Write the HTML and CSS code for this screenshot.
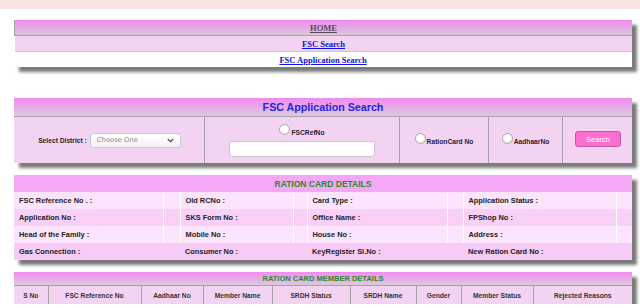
FILE: index.html
```html
<!DOCTYPE html>
<html>
<head>
<meta charset="utf-8">
<link rel="stylesheet" href="styles.css">
</head>
<body>
<div class="topband"></div>

<nav class="nav box">
  <div class="nav-row nav-home"><a class="home-link" href="#">HOME</a></div>
  <div class="nav-row nav-search"><a href="#">FSC Search</a></div>
  <div class="nav-row nav-app"><a href="#">FSC Application Search</a></div>
</nav>

<section class="search box">
  <div class="grad-head search-title">FSC Application Search</div>
  <div class="search-body">
    <div class="cell cell-district">
      <span class="lbl">Select District :</span>
      <div class="select"><span>Choose One</span>
        <svg class="chev" width="7" height="5" viewBox="0 0 7 5"><path d="M0.8 1 L3.5 3.7 L6.2 1" fill="none" stroke="#444" stroke-width="1.2"/></svg>
      </div>
    </div>
    <div class="cell cell-ref">
      <label class="opt"><span class="radio"></span><span class="lbl">FSCRefNo</span></label>
      <div class="textbox"></div>
    </div>
    <div class="cell cell-mid">
      <label class="opt"><span class="radio"></span><span class="lbl">RationCard No</span></label>
    </div>
    <div class="cell cell-mid">
      <label class="opt"><span class="radio"></span><span class="lbl">AadhaarNo</span></label>
    </div>
    <div class="cell cell-btn">
      <button class="btn">Search</button>
    </div>
  </div>
</section>

<section class="details box">
  <div class="details-head">RATION CARD DETAILS</div>
  <table class="dtable">
    <colgroup>
      <col style="width:149px"><col style="width:17px"><col style="width:113px"><col style="width:14px">
      <col style="width:140px"><col style="width:16px"><col style="width:153px"><col style="width:16px">
    </colgroup>
    <tr class="r1"><td>FSC Reference No . :</td><td></td><td>Old RCNo :</td><td></td><td>Card Type :</td><td></td><td>Application Status :</td><td></td></tr>
    <tr class="r2"><td>Application No :</td><td></td><td>SKS Form No :</td><td></td><td>Office Name :</td><td></td><td>FPShop No :</td><td></td></tr>
    <tr class="r1"><td>Head of the Family :</td><td></td><td>Mobile No :</td><td></td><td>House No :</td><td></td><td>Address :</td><td></td></tr>
    <tr class="r4"><td>Gas Connection :</td><td></td><td>Consumer No :</td><td></td><td>KeyRegister Sl.No :</td><td></td><td>New Ration Card No :</td><td></td></tr>
  </table>
</section>

<section class="members box">
  <div class="grad-head members-head">RATION CARD MEMBER DETAILS</div>
  <table class="mtable">
    <colgroup>
      <col style="width:34px"><col style="width:93px"><col style="width:62px"><col style="width:69px"><col style="width:78px">
      <col style="width:66px"><col style="width:45px"><col style="width:72px"><col style="width:99px">
    </colgroup>
    <tr>
      <th>S No</th><th>FSC Reference No</th><th>Aadhaar No</th><th>Member Name</th><th>SRDH Status</th>
      <th>SRDH Name</th><th>Gender</th><th>Member Status</th><th>Rejected Reasons</th>
    </tr>
  </table>
</section>
</body>
</html>
```

FILE: styles.css
```css
* { box-sizing: border-box; }
html, body { margin: 0; padding: 0; background: #fff; }
body { font-family: "Liberation Sans", Arial, sans-serif; color: #222; }

.topband { height: 9px; background: #f8e4e4; }

.box {
  margin-left: 14px;
  width: 618px;
  box-shadow: 5px 5px 3px #7a7a7a;
}

/* NAV */
.nav { margin-top: 11px; background: #fff; }
.nav-row {
  height: 16px;
  display: flex;
  align-items: center;
  justify-content: center;
  font-family: "Liberation Serif", "Times New Roman", serif;
  font-weight: bold;
  font-size: 8.5px;
}
.nav-row a { color: #1010e0; text-decoration: underline; }
.nav-home {
  background: linear-gradient(#f28af2, #d8c8d8);
  border-bottom: 1px solid #a8a0a8;
  border-left: 1px solid #a8a0a8;
}
.nav-home .home-link { color: #584858; }
.nav-search { background: #f2d4f2; border-bottom: 1px solid #d2c2d2; margin-left: 1px; }
.nav-app { height: 15px; background: #fff; }

/* SEARCH PANEL */
.search { margin-top: 31px; background: #f2d4f2; }
.grad-head {
  background: linear-gradient(#f28af2, #dccadc);
  border-bottom: 1px solid #a8a0a8;
  display: flex;
  align-items: center;
  justify-content: center;
  font-weight: bold;
}
.search-title { height: 19px; color: #2323e6; font-size: 10.7px; }
.search-body {
  height: 46px;
  display: grid;
  grid-template-columns: 190px 195px 89px 74px 70px;
}
.cell {
  border-left: 1px solid #a8a0a8;
  display: flex;
  align-items: center;
  justify-content: center;
}
.cell:first-child { border-left: none; }
.lbl { font-weight: bold; font-size: 6.7px; color: #2a2030; }
.cell-district { gap: 3px; padding-left: 1px; }
.select {
  width: 91px;
  height: 15px;
  border: 1px solid #c8c8c8;
  border-radius: 3px;
  background: linear-gradient(#fff, #f2f2f2);
  display: flex;
  align-items: center;
  justify-content: space-between;
  padding: 0 6px 0 6px;
  font-family: "DejaVu Sans", Verdana, sans-serif;
  font-size: 6.8px;
  color: #888;
}
.chev { display: block; }

.cell-ref { flex-direction: column; justify-content: flex-start; padding-top: 7px; gap: 5px; }
.opt { display: flex; align-items: flex-start; gap: 1px; }
.opt .lbl { margin-top: 5px; }
.radio {
  width: 11px;
  height: 11px;
  border-radius: 50%;
  border: 1px solid #aaa;
  background: radial-gradient(circle at 40% 35%, #fff 40%, #e4e4e4);
  display: block;
}
.textbox {
  width: 146px;
  height: 16px;
  border: 1px solid #c8c8c8;
  border-radius: 3px;
  background: #fff;
}
.cell-mid .opt { margin-top: -3px; }

.btn {
  width: 46px;
  height: 16px;
  border: 1px solid #c05aa0;
  border-radius: 3px;
  background: #fa6ed2;
  color: #fff;
  font-family: "Liberation Sans", Arial, sans-serif;
  font-size: 7.5px;
  padding: 0;
  box-shadow: 0 0 0 1px #f8d8f0;
  margin-top: -2px;
  margin-left: 1px;
}

/* DETAILS */
.details { margin-top: 12px; background: #fce4fc; }
.details-head {
  height: 17px;
  background: #f4a8f4;
  color: #2a8a2a;
  font-weight: bold;
  font-size: 8.5px;
  display: flex;
  align-items: center;
  justify-content: center;
}
.dtable { width: 618px; border-collapse: collapse; table-layout: fixed; }
.dtable td {
  height: 17px;
  padding: 0 0 0 5px;
  font-weight: bold;
  font-size: 7.4px;
  color: #222;
  white-space: nowrap;
  border-left: 1px solid #fff;
}
.dtable td:first-child { border-left: none; }
.dtable .r1 { background: #fce4fc; }
.dtable .r2 { background: #f8d0f8; }
.dtable .r4 { background: #f6ccf6; }
.dtable .r4 td { border-left: none; }

/* MEMBERS */
.members { margin-top: 12px; background: #f2d4f2; }
.members-head { height: 14px; color: #2a8a2a; font-size: 7.5px; }
.mtable { width: 618px; border-collapse: collapse; table-layout: fixed; }
.mtable th {
  height: 18px;
  padding: 0;
  font-weight: bold;
  font-size: 6.7px;
  color: #333;
  text-align: center;
  white-space: nowrap;
  border-left: 1px solid #a8a0a8;
}
.mtable th:first-child { border-left: none; }
```
